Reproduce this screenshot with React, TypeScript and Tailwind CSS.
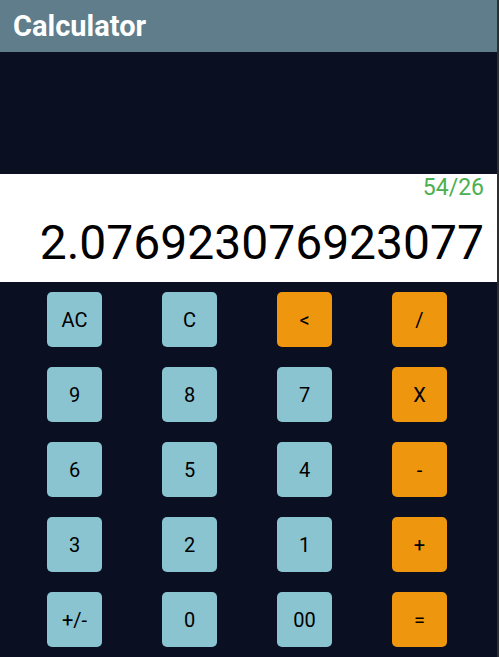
const KEYS: { label: string; op?: boolean }[] = [
  { label: 'AC' },
  { label: 'C' },
  { label: '<', op: true },
  { label: '/', op: true },
  { label: '9' },
  { label: '8' },
  { label: '7' },
  { label: 'X', op: true },
  { label: '6' },
  { label: '5' },
  { label: '4' },
  { label: '-', op: true },
  { label: '3' },
  { label: '2' },
  { label: '1' },
  { label: '+', op: true },
  { label: '+/-' },
  { label: '0' },
  { label: '00' },
  { label: '=', op: true },
];

export default function App() {
  return (
    <div
      className="flex h-[657px] w-[499px] bg-[#2e2e2e]"
      style={{ fontFamily: 'Roboto, "Noto Sans", sans-serif' }}
    >
      <div className="flex w-[497px] flex-col bg-[#0a0f21]">
        <header className="flex h-[52px] items-center bg-[#607d8b] px-[13px]">
          <h1 className="text-[29px] font-bold leading-none text-white">Calculator</h1>
        </header>
        <div className="h-[122px]" />
        <div className="flex h-[108px] flex-col items-end bg-white pr-[13px]">
          <div className="mt-[-1px] text-[23px] leading-[30px] text-[#4caf50]">54/26</div>
          <div className="mt-[12px] text-[48px] leading-[56px] text-black">2.076923076923077</div>
        </div>
        <div className="grid grid-cols-[repeat(4,115px)] gap-y-[20px] pl-[17px] pt-[10px]">
          {KEYS.map((k) => (
            <div key={k.label} className="flex justify-center">
              <button
                type="button"
                className={`flex h-[55px] w-[55px] items-center justify-center rounded-[5px] text-[20px] text-black ${
                  k.op ? 'bg-[#ee960e]' : 'bg-[#8ac4d0]'
                }`}
              >
                {k.label}
              </button>
            </div>
          ))}
        </div>
      </div>
    </div>
  );
}
